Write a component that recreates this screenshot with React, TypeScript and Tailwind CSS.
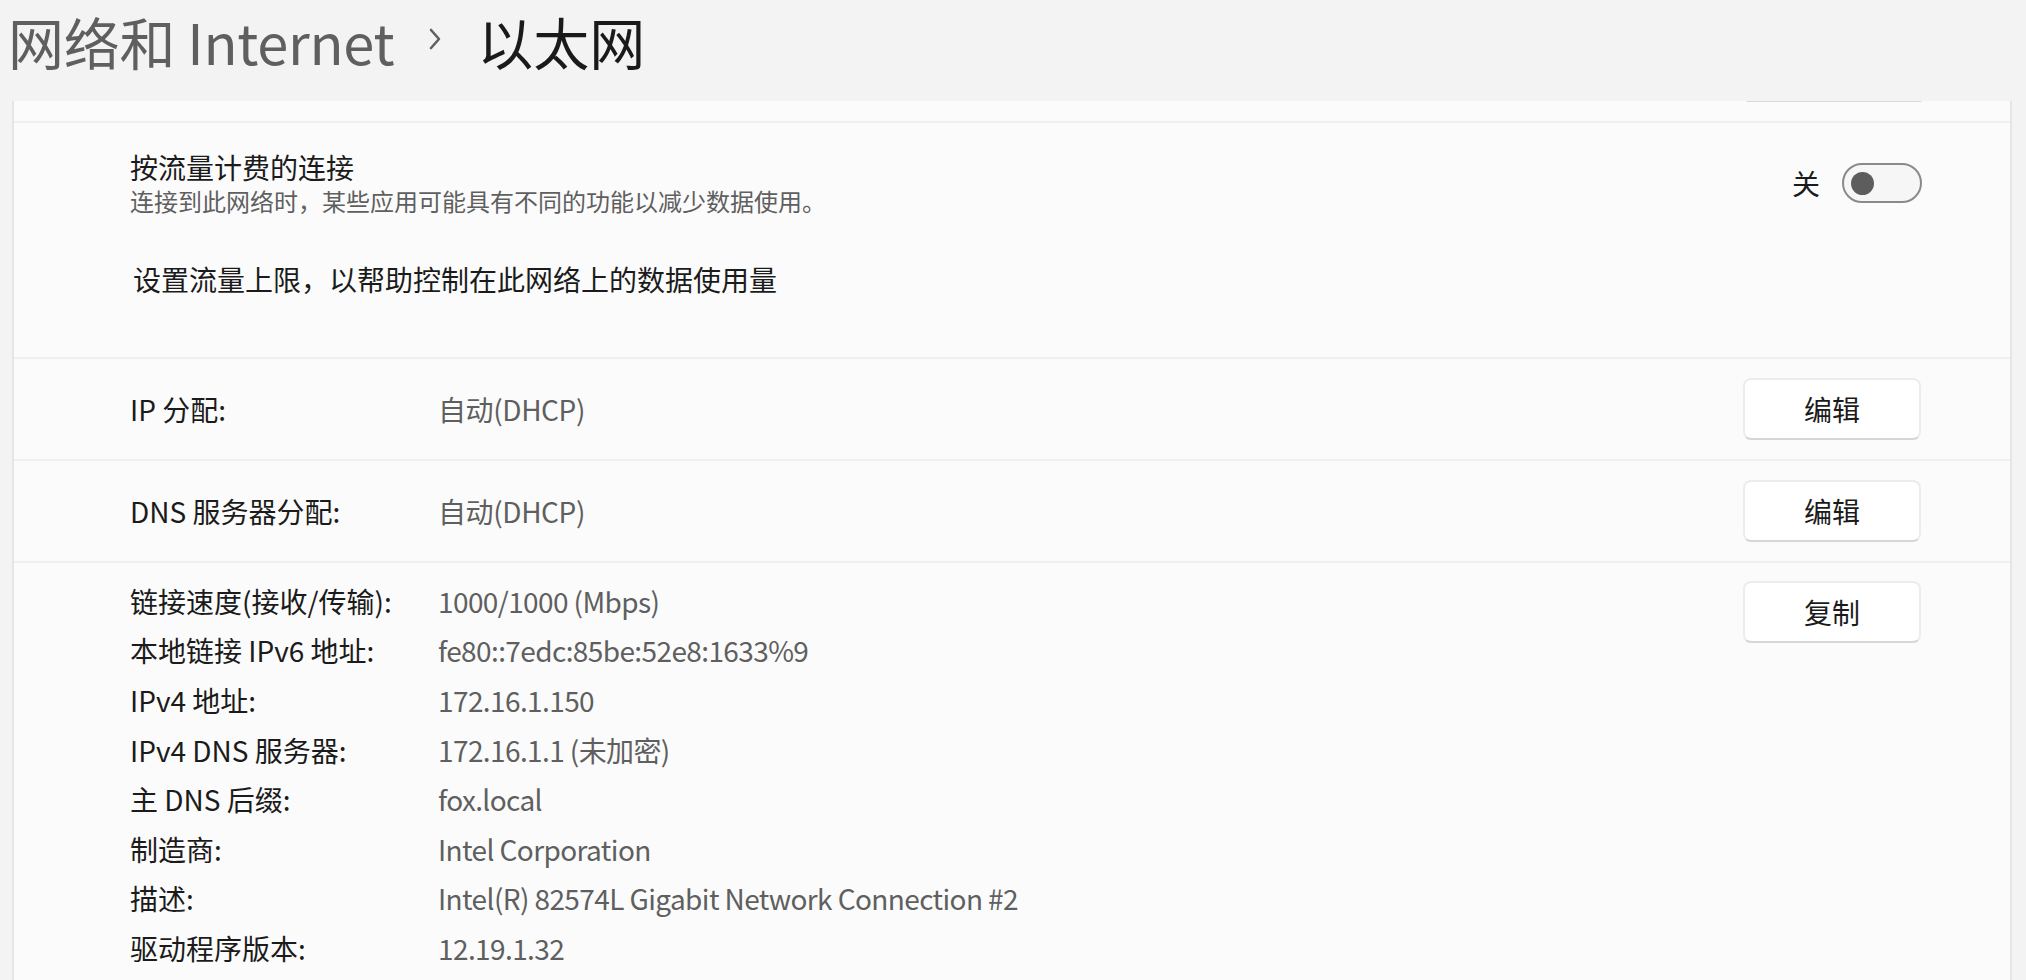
const font = { fontFamily: '"Noto Sans CJK SC", "Noto Sans", sans-serif' };

function Divider() {
  return <div className="h-[2px] bg-[#efefef] shrink-0" />;
}

function ActionButton({ label }: { label: string }) {
  return (
    <button className="w-[178px] h-[62px] shrink-0 rounded-[8px] bg-white border-2 border-[#ececec] border-b-[#d6d6d6] text-[28px] leading-[36px] text-[#1b1b1b]">
      {label}
    </button>
  );
}

function Toggle() {
  return (
    <div className="w-[80px] h-[40px] rounded-full border-2 border-[#8a8a8a] bg-[#f6f6f6] flex items-center pl-[7px]">
      <div className="w-[23px] h-[23px] rounded-full bg-[#5d5d5d]" />
    </div>
  );
}

const details: [string, string][] = [
  ['链接速度(接收/传输):', '1000/1000 (Mbps)'],
  ['本地链接 IPv6 地址:', 'fe80::7edc:85be:52e8:1633%9'],
  ['IPv4 地址:', '172.16.1.150'],
  ['IPv4 DNS 服务器:', '172.16.1.1 (未加密)'],
  ['主 DNS 后缀:', 'fox.local'],
  ['制造商:', 'Intel Corporation'],
  ['描述:', 'Intel(R) 82574L Gigabit Network Connection #2'],
  ['驱动程序版本:', '12.19.1.32'],
];

export default function App() {
  return (
    <div className="w-[2026px] h-[980px] bg-[#f3f3f3] overflow-hidden flex flex-col" style={font}>
      <header className="h-[101px] shrink-0 flex items-start pl-[8px]">
        <span className="text-[56px] leading-[82px] text-[#5f5f5f] tracking-[-0.3px]">网络和 Internet</span>
        <svg width="14" height="22" viewBox="0 0 14 22" className="ml-[34px] mr-[35px] mt-[28px]">
          <path d="M3 2 L11 11 L3 20" fill="none" stroke="#606060" strokeWidth="2.6" strokeLinecap="round" strokeLinejoin="round" />
        </svg>
        <span className="text-[56px] leading-[82px] text-[#1a1a1a]">以太网</span>
      </header>

      <div className="flex-1 pl-[12px] pr-[14px] min-h-0">
        <div className="h-full border-x-2 border-[#e5e5e5] bg-[#fbfbfb] flex flex-col">
          <div className="h-[20px] shrink-0 overflow-hidden flex justify-end items-start pr-[88px]">
            <div className="w-[176px] h-[2px] -mt-[1px] bg-[#d8d8d8] rounded-b-[8px]" />
          </div>
          <Divider />

          <div className="h-[234px] shrink-0 pl-[116px] pr-[88px] pt-[26px]">
            <div className="flex items-center justify-between">
              <div>
                <div className="text-[28px] leading-[36px] text-[#1b1b1b]">按流量计费的连接</div>
                <div className="text-[24px] leading-[32px] text-[#5f5f5f]">连接到此网络时，某些应用可能具有不同的功能以减少数据使用。</div>
              </div>
              <div className="flex items-center gap-[22px]">
                <span className="text-[28px] leading-[36px] text-[#1b1b1b]">关</span>
                <Toggle />
              </div>
            </div>
            <div className="mt-[44px] ml-[3px] text-[28px] leading-[36px] text-[#1b1b1b]">
              设置流量上限，以帮助控制在此网络上的数据使用量
            </div>
          </div>
          <Divider />

          <div className="h-[100px] shrink-0 pl-[116px] pr-[89px] flex items-center">
            <span className="w-[308px] text-[28px] leading-[36px] text-[#1b1b1b]">IP 分配:</span>
            <span className="flex-1 text-[28px] leading-[36px] text-[#5f5f5f] tracking-[-0.4px]">自动(DHCP)</span>
            <ActionButton label="编辑" />
          </div>
          <Divider />

          <div className="h-[100px] shrink-0 pl-[116px] pr-[89px] flex items-center">
            <span className="w-[308px] text-[28px] leading-[36px] text-[#1b1b1b]">DNS 服务器分配:</span>
            <span className="flex-1 text-[28px] leading-[36px] text-[#5f5f5f] tracking-[-0.4px]">自动(DHCP)</span>
            <ActionButton label="编辑" />
          </div>
          <Divider />

          <div className="flex pl-[116px] pr-[89px] pt-[13px]">
            <div className="flex-1">
              {details.map(([k, v]) => (
                <div key={k} className="flex h-[49.6px] items-center">
                  <span className="w-[308px] text-[28px] leading-[36px] text-[#1b1b1b]">{k}</span>
                  <span className="text-[28px] leading-[36px] text-[#5f5f5f] tracking-[-0.6px]">{v}</span>
                </div>
              ))}
            </div>
            <div className="pt-[5px]">
              <ActionButton label="复制" />
            </div>
          </div>
        </div>
      </div>
    </div>
  );
}
